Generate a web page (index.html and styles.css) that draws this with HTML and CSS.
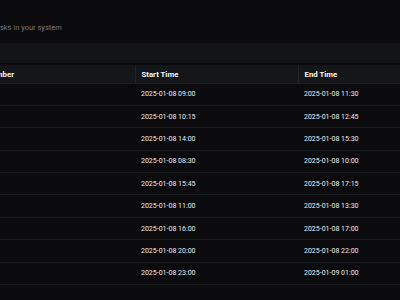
FILE: index.html
```html
<!DOCTYPE html>
<html lang="en">
<head>
    <meta charset="UTF-8">
    <meta name="viewport" content="width=device-width, initial-scale=1.0">
    <title>Tasks</title>
    <link rel="stylesheet" href="styles.css">
</head>
<body>
    <div class="page">
        <p class="subtitle">All tasks in your system</p>

        <!-- Toolbar -->
        <div class="toolbar"></div>

        <!-- Task Table -->
        <table class="tasks">
            <colgroup>
                <col class="col-num">
                <col class="col-start">
                <col class="col-end">
            </colgroup>
            <thead>
                <tr>
                    <th>Number</th>
                    <th>Start Time</th>
                    <th>End Time</th>
                </tr>
            </thead>
            <tbody>
                <tr><td></td><td>2025-01-08 09:00</td><td>2025-01-08 11:30</td></tr>
                <tr><td></td><td>2025-01-08 10:15</td><td>2025-01-08 12:45</td></tr>
                <tr><td></td><td>2025-01-08 14:00</td><td>2025-01-08 15:30</td></tr>
                <tr><td></td><td>2025-01-08 08:30</td><td>2025-01-08 10:00</td></tr>
                <tr><td></td><td>2025-01-08 15:45</td><td>2025-01-08 17:15</td></tr>
                <tr><td></td><td>2025-01-08 11:00</td><td>2025-01-08 13:30</td></tr>
                <tr><td></td><td>2025-01-08 16:00</td><td>2025-01-08 17:00</td></tr>
                <tr><td></td><td>2025-01-08 20:00</td><td>2025-01-08 22:00</td></tr>
                <tr><td></td><td>2025-01-08 23:00</td><td>2025-01-09 01:00</td></tr>
            </tbody>
        </table>
    </div>
</body>
</html>
```

FILE: styles.css
```css
body {
    font-family: Roboto, "Noto Sans", sans-serif;
    background-color: #0b0b0e;
    color: #ececee;
    margin: 0;
    padding: 0;
    overflow: hidden;
}
.page {
    margin-left: -20px;
    width: 520px;
}
.subtitle {
    margin: 0;
    padding: 23px 0 0 3px;
    height: 20px;
    font-size: 7.5px;
    line-height: 10px;
    color: #77777e;
}
.toolbar {
    height: 20px;
    background-color: #131418;
    margin-bottom: 2px;
}
.tasks {
    border-collapse: collapse;
    table-layout: fixed;
    width: 520px;
}
.col-num {
    width: 155px;
}
.col-start {
    width: 163px;
}
.col-end {
    width: 202px;
}
.tasks th {
    background-color: #15161a;
    color: #f7f7f8;
    font-size: 7.8px;
    font-weight: bold;
    text-align: left;
    height: 18px;
    padding: 1px 6px 0;
    border-left: 1px solid #22232a;
    border-bottom: 1px solid #1d1e23;
    box-sizing: border-box;
}
.tasks th:first-child {
    border-left: none;
}
.tasks td {
    height: 22.4px;
    padding: 0 6px;
    font-size: 7px;
    color: #ececee;
    border-bottom: 1px solid #1b1c21;
    box-sizing: border-box;
}
```
